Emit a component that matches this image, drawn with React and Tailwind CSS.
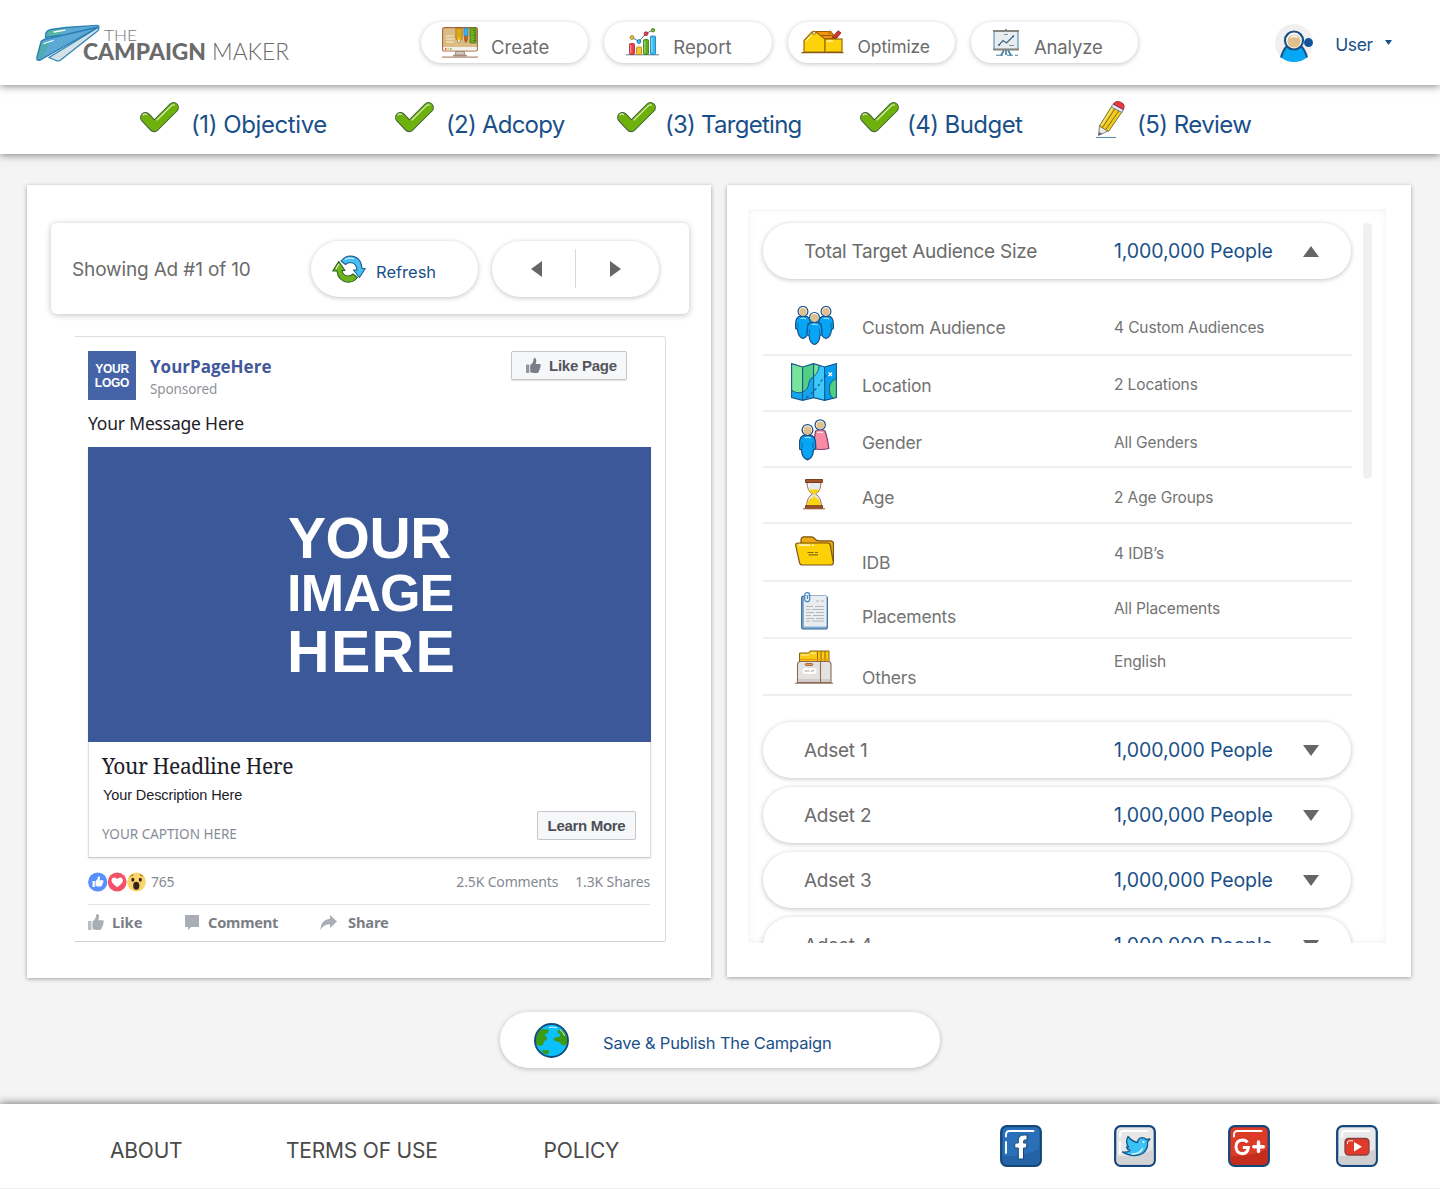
import React from "react";

/* ---------- brand ---------- */
function Logo() {
  return (
    <svg width="256" height="44" viewBox="34 22 256 44" className="block">
      <path d="M45.500 37.500Q44.500 31 51 29.500L66 27.500 97 25.500Q100 25.500 98.500 28L62 35z" fill="#58b3a4" stroke="#2b7fb5" strokeWidth="1.300" />
      <path d="M64 29L97 25.500Q100 25.500 98.500 28L60 36z" fill="#5ba9d4" />
      <path d="M49 57.500L98 27.500Q100 29 97.500 31L60 60.500Q58 61.500 56 60.500Z" fill="#d3e2e7" stroke="#2b7fb5" strokeWidth="1.200" />
      <path d="M41 42 Q42 40 46 39 L98.500 27 40 60 Q36 61 37 57Z" fill="#5ba9d4" stroke="#2b7fb5" strokeWidth="1.400" />
      <path d="M41.500 43L50 40.500 43 57 39 59.300Q37.500 59 38 56Z" fill="#4fae9b" opacity=".7" />
      <path d="M54 32l11-1.800M44 43.500l9-3" stroke="#fff" strokeWidth="1.300" strokeLinecap="round" />
      <text x="104" y="40.800" fontFamily="Lato, sans-serif" fontWeight="300" fontSize="16.500" textLength="33" lengthAdjust="spacingAndGlyphs" fill="#777">THE</text>
      <text x="83" y="59.500" fontFamily="Lato, sans-serif" fontWeight="900" fontSize="22.500" textLength="123" lengthAdjust="spacingAndGlyphs" fill="#6b6b6b">CAMPAIGN</text>
      <text x="212" y="59.500" fontFamily="Lato, sans-serif" fontWeight="300" fontSize="22.500" textLength="77" lengthAdjust="spacingAndGlyphs" fill="#6b6b6b">MAKER</text>
    </svg>
  );
}

/* ---------- navigation icons ---------- */
function CreateIcon() {
  return (
    <svg width="36" height="31" viewBox="0 0 36 31" className="block">
      <path d="M14 24h8l1 4H13z" fill="#cfc9c6" stroke="#8a6a58" strokeWidth=".7" />
      <path d="M0 30.200h36M11 28.600h14" stroke="#b08a78" strokeWidth="1.200" />
      <rect x=".6" y=".6" width="34.800" height="23.400" rx="1.600" fill="#dcbc85" stroke="#a5673f" strokeWidth="1.100" />
      <path d="M1.200 20h33.600v2.200q0 1.300-1.300 1.300H2.500q-1.300 0-1.300-1.300z" fill="#f3f1ef" />
      <path d="M4 9h8M4 12h8M4 15h8" stroke="#f6ead2" strokeWidth="1" />
      <path d="M14 1h6v10l-3 5-3-5z" fill="#f5c518" stroke="#8a5a1c" strokeWidth=".8" />
      <path d="M16 1v10M18 1v10" stroke="#b07a10" strokeWidth=".7" />
      <path d="M15.500 13h3L17 16z" fill="#eee" />
      <path d="M22 1h4v8h-4z" fill="#35b5ee" stroke="#3a6a8a" strokeWidth=".6" />
      <path d="M22 9h4v4q-1 3-3 3 0-2-1-3z" fill="#b5622b" />
      <path d="M28 1h6v15h-6z" fill="#6fae1c" stroke="#44701b" strokeWidth=".8" />
      <path d="M31 3.500h2.500M32 6h1.500M31 8.500h2.500M32 11h1.500M31 13.500h2.500" stroke="#34561a" strokeWidth=".7" />
      <path d="M3 22h1.500" stroke="#e33" strokeWidth="1.300" />
      <path d="M5.500 22H7" stroke="#eb3" strokeWidth="1.300" />
      <path d="M8 22h1.500" stroke="#4b4" strokeWidth="1.300" />
    </svg>
  );
}

function ReportIcon() {
  return (
    <svg width="33" height="28" viewBox="0 0 33 28" className="block">
      <path d="M0 26.800h33" stroke="#5b7f96" strokeWidth="1" />
      <rect x="3.500" y="15.500" width="5" height="11" rx="1" fill="#ee3e4c" stroke="#a82531" strokeWidth=".8" />
      <rect x="10.500" y="19" width="5" height="7.500" rx="1" fill="#f8c52c" stroke="#b07f12" strokeWidth=".8" />
      <rect x="17.500" y="11.500" width="5" height="15" rx="1" fill="#5fae18" stroke="#3a7410" strokeWidth=".8" />
      <rect x="24.500" y="8" width="5" height="18.500" rx="1" fill="#35bdf4" stroke="#1b76a8" strokeWidth=".8" />
      <path d="M4.800 17v8M18.800 13v12M25.800 10v14" stroke="#fff" strokeOpacity=".7" strokeWidth=".8" />
      <path d="M6 9.500L13 13.500 20 5.500 27 2" fill="none" stroke="#55778e" strokeWidth="1" />
      <circle cx="6" cy="9.500" r="1.900" fill="#f3c52a" stroke="#7a7a32" strokeWidth=".8" />
      <circle cx="13" cy="13.500" r="1.900" fill="#35bdf4" stroke="#2a6a90" strokeWidth=".8" />
      <circle cx="20" cy="5.700" r="1.900" fill="#ee3e4c" stroke="#8a2a33" strokeWidth=".8" />
      <circle cx="27" cy="2.200" r="1.700" fill="#7cc62c" stroke="#3a7410" strokeWidth=".8" />
    </svg>
  );
}

function OptimizeIcon() {
  return (
    <svg width="43" height="24" viewBox="0 0 43 24" className="block">
      <path d="M12 1.500h18l5 7H14z" fill="#f5930c" stroke="#9c5a08" strokeWidth="1" />
      <path d="M16 5.500h16" stroke="#9c5a08" strokeWidth="1" />
      <path d="M31 7.500L37 .800l3 2L35.500 8.500z" fill="#cf3b28" stroke="#8a2516" strokeWidth=".8" />
      <path d="M3 22V10.500L11 2q2-1.500 4 0l9 7v13z" fill="#fcd20a" stroke="#9c6a08" strokeWidth="1.200" />
      <rect x="24" y="9" width="17" height="13" fill="#fcd20a" stroke="#9c6a08" strokeWidth="1.200" />
      <path d="M5 11l5.500-6M26 11h6" stroke="#fff" strokeWidth="1" />
      <circle cx="13" cy="3" r="1.500" fill="#fff" stroke="#9c6a08" strokeWidth=".9" />
      <circle cx="29" cy="2.300" r="1.300" fill="#f5930c" stroke="#9c5a08" strokeWidth=".8" />
      <path d="M.500 22.600h42" stroke="#8a5a1c" strokeWidth="1.200" />
    </svg>
  );
}

function AnalyzeIcon() {
  return (
    <svg width="26" height="27" viewBox="0 0 26 27" className="block">
      <path d="M13 0v3M11 21L8 26.500M15 21l3 5.500M13 21v5" stroke="#3c7ea6" strokeWidth="1.600" />
      <path d="M3 26.300h7M14 26.300h6M22 26.300h3" stroke="#4c86aa" strokeWidth="1.100" />
      <rect x="1" y="2" width="24" height="18.500" fill="#e9edef" stroke="#5f93b4" strokeWidth="1.200" />
      <path d="M0 2h26M0 20.500h26" stroke="#85877e" strokeWidth="2" />
      <path d="M6 16l4-4.500 3.500 2.500 7-7" fill="none" stroke="#3d6684" strokeWidth="1.200" />
      <circle cx="6" cy="16" r="1" fill="#3d6684" />
      <circle cx="20.300" cy="7.200" r="1" fill="#3d6684" />
      <path d="M11 5.500h4M16 16.500h5" stroke="#7d96a5" strokeWidth="1" />
    </svg>
  );
}

function Avatar() {
  return (
    <svg width="40" height="38" viewBox="0 0 40 38" className="block">
      <circle cx="19" cy="19" r="19" fill="#f0f0f0" />
      <path d="M6 33.500Q8 26 12 22h14q4 4 6 11.500Q26 38 19 38T6 33.500z" fill="#06a8f6" />
      <path d="M6 33.500Q8 26 12 22M32 33.500Q30 26 26 22" fill="none" stroke="#1a5284" strokeWidth="2" />
      <circle cx="19" cy="16.500" r="9" fill="#fff" stroke="#1a5284" strokeWidth="2.200" />
      <circle cx="19" cy="17" r="6.600" fill="#dfc08d" />
      <path d="M15.500 13.500q3.500-2.500 7 0" fill="none" stroke="#fff" strokeWidth="1.300" />
      <circle cx="33.500" cy="18.600" r="4.500" fill="#12549a" />
    </svg>
  );
}

/* ---------- step icons ---------- */
function CheckIcon() {
  return (
    <svg width="39" height="31" viewBox="0 0 39 31" className="block">
      <path d="M5.500 15.500L14.200 24.800 33.500 5.500" fill="none" stroke="#3c5a3a" strokeWidth="10.800" strokeLinecap="round" strokeLinejoin="round" />
      <path d="M5.500 15.500L14.200 24.800 33.500 5.500" fill="none" stroke="#6fb10c" strokeWidth="9" strokeLinecap="round" strokeLinejoin="round" />
      <path d="M3 12.800q1.500-1.500 3.500-.3M17 18L31.500 3.600q1.500-1.200 3-.6" fill="none" stroke="#d9efb4" strokeWidth="1.200" strokeLinecap="round" />
    </svg>
  );
}

function PencilIcon() {
  return (
    <svg width="29" height="38" viewBox="0 0 29 38" className="block">
      <path d="M0 36.500h20" stroke="#5d8aa8" strokeWidth="1.100" />
      <path d="M3.500 24.500L2.500 34.500 12 30z" fill="#ece8e4" stroke="#6a7686" strokeWidth=".9" />
      <path d="M2.800 31v3.500l3.500-1.800z" fill="#5a6674" />
      <path d="M3.500 25L15.500 5.500l10.500 5.500L12.500 30.500z" fill="#f3cb1d" stroke="#7d7434" strokeWidth="1" />
      <path d="M6.500 26.500L19 7.500M9.800 28.500L23 9.500" stroke="#7c6a22" strokeWidth="1" />
      <path d="M5.300 24.500L17 6.500" stroke="#fdf0a0" strokeWidth="1" />
      <path d="M15.300 6l1.800-2.800 10.300 5.500L26 11.500z" fill="#e4e9ee" stroke="#6a7686" strokeWidth=".9" />
      <path d="M17.300 3Q19.300-.5 24 .9q4.500 1.600 4.200 4.600l-.8 3z" fill="#ea3743" stroke="#953039" strokeWidth=".9" />
    </svg>
  );
}

/* ---------- ad preview icons ---------- */
function RefreshIcon() {
  return (
    <svg width="34" height="28" viewBox="0 0 34 28" preserveAspectRatio="none" className="block">
      <path d="M9 6Q13 1 18.500 1 29 1.500 30 13.500h3.300L27.500 22.500 21.500 15H25Q24.500 8 18.500 7.500q-3 0-5 2z" fill="#45c0f5" stroke="#1d5f8f" strokeWidth="1.100" strokeLinejoin="round" />
      <path d="M25.500 22.500q-4 4.700-9 4.700Q6 26.500 5 16H.700L6.700 6.500 13 15.500H10q1 5.500 6.300 5.500 2.700 0 4.700-2z" fill="#6cb518" stroke="#2f5f2a" strokeWidth="1.100" strokeLinejoin="round" />
      <path d="M13 4.500q4-2.500 9-.8M4 14l3-5" fill="none" stroke="#fff" strokeOpacity=".85" strokeWidth="1.100" />
    </svg>
  );
}

function Thumb({ className }) {
  return (
    <svg viewBox="0 0 16 16" className={className} preserveAspectRatio="none" fill="currentColor">
      <path d="M0 7h3.500v9H0z" opacity=".8" />
      <path d="M4.500 7.500Q8 5 8 1.500 8 0 9.500 0T11 3q0 1.500-.7 3.300H14.500q1.300 0 1.300 1.300 0 1-.8 1.300.6.500.4 1.300-.1.900-.9 1.100.4.600.1 1.300-.3.700-.9.800.2.500-.1 1.200Q13.300 16 12 16H9q-2.500 0-4.500-1z" />
    </svg>
  );
}

function Reactions() {
  return (
    <svg width="58" height="20" viewBox="0 0 58 20" className="block">
      <circle cx="9.700" cy="10" r="9.600" fill="#5890ff" />
      <path d="M4.500 9h2.300v6H4.500zM7.500 9.200Q10 7.500 10 5.200q0-1 1-1t1 1.800q0 1-.4 2.200h2.900q1 0 1 1t-.6 1q.4.700-.3 1.400.2.800-.5 1.200.1 1.700-1.600 1.700H10q-1.300 0-2.500-.7z" fill="#fff" />
      <circle cx="29.200" cy="10" r="9.400" fill="#f25268" />
      <path d="M29.200 15.200Q23.500 11.500 23.500 8.300 23.700 5.500 26.300 5.500q2 0 2.900 1.800.9-1.800 2.900-1.800 2.600 0 2.800 2.800 0 3.200-5.700 6.900z" fill="#fff" />
      <circle cx="48.500" cy="10" r="9.400" fill="#fbd56b" />
      <ellipse cx="48.300" cy="13.800" rx="3.100" ry="4" fill="#33251b" />
      <ellipse cx="44.800" cy="7.700" rx="1.500" ry="2" fill="#33251b" />
      <ellipse cx="52.300" cy="7.700" rx="1.500" ry="2" fill="#33251b" />
      <path d="M42.300 4.500q1.200-1.700 3-1.600M51.800 2.900q1.800-.1 3 1.600" fill="none" stroke="#6a5526" strokeWidth="1" />
    </svg>
  );
}

/* ---------- audience icons ---------- */
function Person({ x, y, s = 1, body = "#06a5f5" }) {
  return (
    <g transform={`translate(${x} ${y}) scale(${s})`} stroke="#1b4f86" strokeWidth="1.200">
      <path d="M-4 10.500Q-7 12-7.300 17L-7.500 22q.3 1.500 2 1.200Q-5 31 0 32.500 5 31 5.500 23.200q1.700.3 2-1.200L7.300 17Q7 12 4 10.500z" fill={body} />
      <path d="M-5 22v-5M5 22v-5" strokeWidth=".7" />
      <path d="M-2.500 12.500q3-1 5.500.5" fill="none" stroke="#bfe8ff" strokeWidth="1" />
      <circle cx="0" cy="5.400" r="4.900" fill="#fff" />
      <circle cx="0" cy="5.800" r="3.700" fill="#dfc08d" stroke="none" />
    </g>
  );
}

function GroupIcon() {
  return (
    <svg width="39" height="39" viewBox="0 0 39 39" className="block">
      <Person x={8} y={0} />
      <Person x={31} y={0} />
      <Person x={19.5} y={6} />
    </svg>
  );
}

function MapIcon() {
  return (
    <svg width="46" height="38" viewBox="0 0 46 38" className="block">
      <path d="M.6.600l11 3.400 11-3.400 11 3.400L45.400.600v34L33.600 37.400 22.600 34.600 11.600 37.400.600 34.600z" fill="#12a6f2" />
      <path d="M22.600.600l11 3.400v33.400l-11-2.800z" fill="#3cc8fa" />
      <path d="M.6.600L11.600 4v25Q5 31 .6 27z" fill="#7be29d" />
      <path d="M11.600 4l11-3.400v13q-5 2-5 7.500t-6 8z" fill="#51cf85" />
      <path d="M22.600.600L28 2.300q0 7-5.400 11.300z" fill="#7be29d" />
      <path d="M33.600 4L45.400.600v34L33.600 37.400z" fill="#049fee" />
      <path d="M45.400 16q-7 2-7 9.500t4 10l3-.9z" fill="#51cf85" />
      <path d="M.6 27Q5 31 11.600 29q5.500-2.500 6-8t5-7.400Q28 9.300 28 2.300M45.400 16q-7 2-7 9.500t4 10" fill="none" stroke="#1b5e7c" strokeWidth="1" />
      <path d="M.6.600l11 3.400 11-3.400 11 3.400L45.400.600v34L33.600 37.400 22.600 34.600 11.600 37.400.600 34.600zM11.600 4v33.400M22.600.600v34M33.600 4v33.400" fill="none" stroke="#17578c" strokeWidth="1.100" />
      <path d="M15 35Q26 26 29 20t9-9" fill="none" stroke="#17578c" strokeWidth="1.100" strokeDasharray="3 2.500" />
      <path d="M37.500 9.500l3.500 3.500M41 9.500l-3.500 3.500" stroke="#fff" strokeWidth="1.200" />
    </svg>
  );
}

function GenderIcon() {
  return (
    <svg width="31" height="42" viewBox="0 0 31 42" className="block">
      <path d="M16.500 12Q21 9 26 12q2.500 7 3.800 17.500Q22 31.500 14 29.500z" fill="#f98ba3" stroke="#7b3f72" strokeWidth="1.200" />
      <path d="M18.500 13.500q3-1 5.500.3" fill="none" stroke="#fff" strokeWidth="1" />
      <circle cx="21.200" cy="5.900" r="5.100" fill="#fff" stroke="#1b4f86" strokeWidth="1.200" />
      <circle cx="21.200" cy="6.200" r="3.800" fill="#dfc08d" />
      <Person x={8.5} y={5} s={1.1} />
    </svg>
  );
}

function HourglassIcon() {
  return (
    <svg width="22" height="31" viewBox="0 0 22 31" className="block">
      <path d="M4 3h14q0 9-5.500 12Q18 18 18.500 27h-15Q4 18 9.500 15 4 12 4 3z" fill="#e8ebec" stroke="#977352" strokeWidth="1" />
      <path d="M5.500 10.500h11q-1.200 3-5.500 5-4.300-2-5.500-5z" fill="#fbd30f" />
      <path d="M4.300 26.500q.3-6.500 5.700-8l1-3 1 3q5.400 1.500 5.700 8z" fill="#fbd30f" />
      <path d="M6 5v3" stroke="#fff" strokeWidth="1.200" />
      <path d="M2.500.500h17v3h-17zM2.500 26.700h17v2.600h-17z" fill="#a4532a" stroke="#71351b" strokeWidth=".9" />
      <path d="M0 29.800h22" stroke="#8a5a3c" strokeWidth="1" />
    </svg>
  );
}

function FolderIcon() {
  return (
    <svg width="39" height="30" viewBox="0 0 39 30" className="block">
      <path d="M6 8V4Q6 .800 9 .800h7q2.500 0 4 2 1.300 2 4 2h11.500q3 0 3 3V26l-3 2.500z" fill="#eda912" stroke="#7a5518" strokeWidth="1.200" />
      <path d="M3 7h29.500q2 0 2.700 2L38.300 26q.2 3-2.500 3H7.500q-2.400 0-3-2.400L.700 9.500Q.500 7 3 7z" fill="#fdd108" stroke="#7a5518" strokeWidth="1.200" />
      <path d="M3.500 9.200H15M17 9.200h2" stroke="#fff" strokeWidth="1.200" />
      <path d="M12.500 16.500h6M20 16.500h3M13.500 18.800h9.500" stroke="#8a6a18" strokeWidth="1.200" />
    </svg>
  );
}

function DocumentIcon() {
  return (
    <svg width="27" height="38" viewBox="0 0 27 38" className="block">
      <path d="M.7 6Q.700 4 3 4h21q2.300 0 2.300 2v29q0 2-2 2H2.700q-2 0-2-2z" fill="#86aed2" stroke="#33699c" strokeWidth="1.200" />
      <path d="M3 4h22.500v30.500H3z" fill="#e9edf0" />
      <path d="M15 9h3M20 9h3M5 14.500h7M14 14.500h9M5 17.500h4M10.500 17.500H23M5 20.500h8M15 20.500h8M5 23.500h5M12 23.500h11M5 26.500h8M15 26.500h8M5 29h4M11 29h12" stroke="#b4b9bf" strokeWidth="1.200" />
      <rect x="3.700" y=".700" width="5" height="9" rx="2.500" fill="none" stroke="#3e84bd" strokeWidth="1.200" />
      <path d="M6.500 4v3" stroke="#3e84bd" strokeWidth="1.100" />
    </svg>
  );
}

function BoxIcon() {
  return (
    <svg width="38" height="34" viewBox="0 0 38 34" className="block">
      <path d="M4.500 12V3h9l1.500-2h19v11z" fill="#fbcc12" stroke="#8a6216" strokeWidth="1" />
      <path d="M22.500 1v11M26 1v11M30 1v11" stroke="#9a6c10" strokeWidth="1.100" />
      <path d="M6 5h8M16 3.200h5" stroke="#fff3b0" strokeWidth="1" />
      <path d="M5 9.500h29" stroke="#e59f0e" strokeWidth="1.500" />
      <path d="M2.500 32.500V14.500q0-3 3-3h27.500q3 0 3 3v18z" fill="#e3e2e1" stroke="#8d6a55" strokeWidth="1.100" />
      <path d="M3 29h32v3H3z" fill="#cfcdcc" />
      <path d="M25.500 11.500v21" stroke="#8d6a55" strokeWidth="1.100" />
      <rect x="10.300" y="13.500" width="7.500" height="2" rx="1" fill="#e49a52" stroke="#93562a" strokeWidth=".8" />
      <rect x="7.500" y="18" width="14" height="6" rx="3" fill="#fff" />
      <path d="M9.500 21h5M16 21.500l3-1.200" stroke="#a9a5a2" strokeWidth="1.100" />
      <path d="M0 33.300h38" stroke="#8a6a58" strokeWidth="1.100" />
    </svg>
  );
}

function GlobeIcon() {
  return (
    <svg width="35" height="35" viewBox="0 0 35 35" className="block">
      <circle cx="17.500" cy="17.500" r="16.600" fill="#0cc0fb" />
      <path d="M6 6.500Q9 5.500 13.500 6.500q2 .6 1.300 2.500-1 1.500-3.300 2-1.500 1.300 0 2.300 1.800.7 1.500 2.700-.5 1.500-2.500 2-.8 1-1 2.500-1 2.500-3.500 2.500T1.500 20Q.500 12 6 6.500z" fill="#3c9a14" />
      <path d="M23.500 8q1-1.500 3.500-1.500 2 .2 4 3.500 2.500 4 2.500 8.500-.5 3.500-3.500 4-3-.3-4-3-2-.7-4.500-1.300-2.300-.7-2-2.400.8-1.500 3-1.500 3 0 3.500-1.300.5-1.700-1-2.200-2-.8-1.500-2.800z" fill="#3c9a14" />
      <path d="M7 28q4-1.500 7.500-.8 1.500 1 .3 2.500-.5 1.500-3.300 1.500Q9 30 7 28z" fill="#3c9a14" />
      <circle cx="17.500" cy="17.500" r="16.500" fill="none" stroke="#124f7e" strokeWidth="1.900" />
      <path d="M15 4.500q4-1 8 .3M26 6.800q3.300 2.200 4.700 6" fill="none" stroke="#d9f4ff" strokeWidth="1" />
    </svg>
  );
}

/* ---------- social icons ---------- */
function Tile({ fill, shade, gloss, children }) {
  return (
    <svg width="42" height="42" viewBox="0 0 42 42" className="block">
      <rect x="1.200" y="1.200" width="39.600" height="39.600" rx="5.500" fill={fill} stroke="#15487a" strokeWidth="2.300" />
      <path d="M2.500 31Q24 32 39.500 24v11.500q0 4-4 4h-29q-4 0-4-4z" fill={shade} />
      <path d={gloss} fill="none" stroke="#fff" strokeWidth="1.900" strokeLinecap="round" />
      {children}
    </svg>
  );
}

const FacebookTile = () => (
  <Tile fill="#2a70b8" shade="#2262a5" gloss="M6 11.500V9.500Q6 6 9.500 6H33.500M6 17v11">
    <path d="M18.300 34V23h-3.500v-5h3.500v-2.500Q18.300 10 24 10h3v5h-2q-1.500 0-1.500 1.600V18H27l-.6 5h-2.900v11z" fill="#fff" stroke="#15487a" strokeWidth="1" />
  </Tile>
);

const TwitterTile = () => (
  <Tile fill="#e6e6e7" shade="#d3d3d5" gloss="M6 11.500V9.500Q6 6 9.500 6H33.500M6 17v11">
    <path d="M8.500 27q4.500.8 7.500-1.600-3-1-3.500-3.400 1 .3 2 0Q11 17 14 11.500q4 5 9.500 6 .3-4.500 4.700-4.800 2.300 0 4 1.800l3.800-.5-2.500 3q1 7-5 11.500Q19 33.500 8.500 27z" fill="#3cc1f5" stroke="#17578c" strokeWidth="1.300" strokeLinejoin="round" />
    <path d="M18 29q8 0 10.500-5.500" fill="none" stroke="#e2f6ff" strokeWidth="1.400" strokeLinecap="round" />
    <circle cx="29.500" cy="17" r="1" fill="#fff" />
  </Tile>
);

const GoogleTile = () => (
  <Tile fill="#dd3a27" shade="#c42d1c" gloss="M6 11.500V9.500Q6 6 9.500 6H33.500">
    <path d="M19.500 17.300Q17.800 15 14.300 15 8.200 15.400 8 21.700 8.200 28 14.300 28.700q5.500-.4 6-6.200h-5.500" fill="none" stroke="#fff" strokeWidth="3" />
    <path d="M30.500 17v9.500M25.800 21.700h9.500" stroke="#fff" strokeWidth="3.400" strokeLinecap="round" />
  </Tile>
);

const YoutubeTile = () => (
  <Tile fill="#e9e9ea" shade="#cfcfd1" gloss="M6 11.500V9.500Q6 6 9.500 6H33.500">
    <rect x="9" y="13.500" width="24" height="16.500" rx="3.500" fill="#e03a2b" stroke="#8a4040" strokeWidth="1.300" />
    <path d="M11.500 19v-1.500q0-1.700 1.700-1.700h4" fill="none" stroke="#fff" strokeWidth="1" />
    <path d="M18 17l8 4.700-8 4.800z" fill="#fff" />
  </Tile>
);

/* ---------- data ---------- */
const PILL = "rounded-full bg-white shadow-[0_1px_5px_rgba(0,0,0,0.24)]";

const NAV = [
  { label: "Create", Icon: CreateIcon, pad: "pl-[21px]", icon: "w-[36px]", text: "ml-[13px] mt-[9px] text-[18.5px]" },
  { label: "Report", Icon: ReportIcon, pad: "pl-[22px]", icon: "mb-[1px] w-[33px]", text: "ml-[14px] mt-[9px] text-[18.5px]" },
  { label: "Optimize", Icon: OptimizeIcon, pad: "pl-[13px]", icon: "mb-[1px] w-[43px]", text: "ml-[14px] mt-[8px] text-[17.5px] tracking-[-0.12px]" },
  { label: "Analyze", Icon: AnalyzeIcon, pad: "pl-[22px]", icon: "mb-[1px] w-[26px]", text: "ml-[15px] mt-[9px] text-[18.5px] tracking-[-0.15px]" },
];

const STEPS = [
  { label: "(1) Objective", Icon: CheckIcon, text: "ml-[12px] tracking-[-0.42px]", icon: "mb-[6px]" },
  { label: "(2) Adcopy", Icon: CheckIcon, text: "ml-[12px] tracking-[-0.75px]", icon: "mb-[6px]" },
  { label: "(3) Targeting", Icon: CheckIcon, text: "ml-[9px] tracking-[-0.74px]", icon: "mb-[6px]" },
  { label: "(4) Budget", Icon: CheckIcon, text: "ml-[8px] tracking-[-0.55px]", icon: "mb-[6px]" },
  { label: "(5) Review", Icon: PencilIcon, text: "ml-[12px] tracking-[-0.55px]", icon: "" },
];

const ROWS = [
  { label: "Custom Audience", value: "4 Custom Audiences", Icon: GroupIcon, row: "h-[56px]", icon: "mt-[6px]", l: "mt-[19px]", v: "mt-[20px]" },
  { label: "Location", value: "2 Locations", Icon: MapIcon, row: "h-[56px]", icon: "mt-[7px]", l: "mt-[21px]", v: "mt-[21px]" },
  { label: "Gender", value: "All Genders", Icon: GenderIcon, row: "h-[56px]", icon: "mt-[7px]", l: "mt-[22px]", v: "mt-[23px]" },
  { label: "Age", value: "2 Age Groups", Icon: HourglassIcon, row: "h-[56px]", icon: "mt-[11px]", l: "mt-[21px]", v: "mt-[22px]" },
  { label: "IDB", value: "4 IDB’s", Icon: FolderIcon, row: "h-[58px]", icon: "mt-[12px]", l: "mt-[30px]", v: "mt-[22px]" },
  { label: "Placements", value: "All Placements", Icon: DocumentIcon, row: "h-[57px]", icon: "mt-[10px]", l: "mt-[26px]", v: "mt-[19px]" },
  { label: "Others", value: "English", Icon: BoxIcon, row: "h-[57px]", icon: "mt-[11px]", l: "mt-[30px]", v: "mt-[15px]" },
];

const ADSETS = ["Adset 1", "Adset 2", "Adset 3", "Adset 4"];

/* ---------- sections ---------- */
function Header() {
  return (
    <header className="relative z-20 flex h-[85px] bg-white pl-[34px] shadow-[0_1px_8px_rgba(0,0,0,0.5)]">
      <div className="w-[387px] pt-[22px]"><Logo /></div>
      <nav className="mt-[22px] flex h-[41px] gap-[16px]">
        {NAV.map(({ label, Icon, pad, icon, text }) => (
          <a key={label} className={`flex h-[41px] w-[167.3px] items-center text-[#6b6b6b] ${PILL} ${pad}`}>
            <span className={`shrink-0 ${icon}`}><Icon /></span>
            <span className={`leading-none ${text}`}>{label}</span>
          </a>
        ))}
      </nav>
      <div className="ml-[137px] mt-[24px] flex h-[38px] items-center text-[#1a5089]">
        <Avatar />
        <span className="ml-[20px] mt-[3px] text-[17.5px] leading-none tracking-[-0.4px]">User</span>
        <svg width="7" height="5" viewBox="0 0 7 5" className="mb-[1px] ml-[12px]"><path d="M0 0h7L3.500 5z" fill="#1a5089" /></svg>
      </div>
    </header>
  );
}

function Steps() {
  return (
    <div className="relative z-10 grid h-[69px] grid-cols-[255px_222px_243px_236px_1fr] bg-white pl-[140px] shadow-[0_1px_8px_rgba(0,0,0,0.5)]">
      {STEPS.map(({ label, Icon, text, icon }) => (
        <div key={label} className="flex h-[70px] items-center">
          <span className={icon}><Icon /></span>
          <span className={`mt-[9px] text-[24px] leading-none text-[#1a5089] ${text}`}>{label}</span>
        </div>
      ))}
    </div>
  );
}

function AdCard() {
  return (
    <article className="ml-[48px] mt-[22px] h-[606px] w-[591px] rounded-r-[3px] border-y border-r border-[#dcdde0] border-b-[#cfd0d3] pl-[13px] pr-[14px] font-['Noto_Sans',sans-serif]">
      <div className="flex pt-[14px]">
        <div className="flex h-[49px] w-[48px] flex-col items-center justify-center gap-[2px] bg-[#4564a8] font-['Liberation_Sans',sans-serif] text-[12px] font-bold leading-none tracking-[-0.25px] text-white">
          <span>YOUR</span>
          <span>LOGO</span>
        </div>
        <div className="ml-[14px] w-[361px] pt-[7px] leading-none">
          <div className="font-['Open_Sans','Noto_Sans',sans-serif] text-[17px] font-bold leading-none text-[#42589b]">YourPageHere</div>
          <div className="mt-[8px] text-[13.5px] leading-none tracking-[-0.1px] text-[#8f9298]">Sponsored</div>
        </div>
        <div className="flex h-[29px] w-[116px] items-center rounded-[2px] border border-[#c4c6cb] bg-[#f6f7f9] pl-[14px] font-['Liberation_Sans',sans-serif] text-[15px] font-bold leading-none text-[#52555c] shadow-[0_1px_1px_rgba(0,0,0,0.12)]">
          <Thumb className="h-[15px] w-[15px] text-[#7b7e86]" />
          <span className="ml-[8px] tracking-[-0.25px]">Like Page</span>
        </div>
      </div>
      <p className="mt-[15px] h-[32px] text-[17.5px] leading-none tracking-[-0.2px] text-[#1d2129]">Your Message Here</p>
      <div className="h-[411px] w-[563px] border border-t-0 border-[#dedfe2] border-b-[#c9cacd] shadow-[0_1px_2px_rgba(0,0,0,0.1)]">
        <div className="-mx-px h-[295px] bg-[#3b5998] pl-[200px] pt-[63px] font-['Liberation_Sans',sans-serif] font-bold leading-none text-white">
          <div className="h-[57px] text-[57px] leading-[57px] tracking-[-0.4px]">YOUR</div>
          <div className="-ml-[1px] h-[54px] text-[52px] leading-[53px] tracking-[-0.8px]">IMAGE</div>
          <div className="-ml-[1px] h-[62px] text-[59px] leading-[62px] tracking-[1.3px]">HERE</div>
        </div>
        <div className="flex">
          <div className="w-[448px] pl-[13px] pt-[13px]">
            <div className="font-['Noto_Serif','DejaVu_Serif',serif] text-[21px] leading-[23px] tracking-[-0.35px] text-[#1d2129]">Your Headline Here</div>
            <div className="ml-[1px] mt-[10px] font-['Liberation_Sans',sans-serif] text-[14.5px] leading-none tracking-[-0.1px] text-[#1d2129]">Your Description Here</div>
            <div className="mt-[25px] text-[13.5px] leading-none text-[#868c98]">YOUR CAPTION HERE</div>
          </div>
          <div className="mt-[69px] flex h-[29px] w-[99px] items-center justify-center rounded-[2px] border border-[#c4c6cb] bg-[#f6f7f9] font-['Liberation_Sans',sans-serif] text-[15px] font-bold leading-none tracking-[-0.3px] text-[#4b4f56]">Learn More</div>
        </div>
      </div>
      <div className="flex h-[47px] w-[562px] items-center border-b border-[#e3e4e6] pt-[2px] text-[14px] leading-none text-[#858992]">
        <Reactions />
        <span className="ml-[5px] tracking-[-0.3px]">765</span>
        <span className="ml-auto tracking-[-0.15px]">2.5K Comments</span>
        <span className="ml-[17px] tracking-[-0.15px]">1.3K Shares</span>
      </div>
      <div className="flex h-[34px] items-center text-[14.7px] font-bold leading-none text-[#7b7e86]">
        <Thumb className="h-[16px] w-[16px] text-[#a9adb6]" />
        <span className="ml-[8px] w-[73px]">Like</span>
        <svg width="14" height="15" viewBox="0 0 14 15"><path d="M0 0h14v12H6l-3 3v-3H0z" fill="#a9adb6" /></svg>
        <span className="ml-[9px] w-[112px] tracking-[-0.25px]">Comment</span>
        <svg width="17" height="15" viewBox="0 0 17 15"><path d="M10 0l7 6.500-7 6.500V9.300Q3.500 9.300 0 15 1 4.500 10 3.700z" fill="#a9adb6" /></svg>
        <span className="ml-[11px] tracking-[-0.15px]">Share</span>
      </div>
    </article>
  );
}

function AdPanel() {
  return (
    <section className="h-[793px] w-[684px] bg-white pt-[38px] shadow-[0_1px_4px_rgba(0,0,0,0.35)]">
      <div className="ml-[24px] flex h-[91px] w-[638px] items-center rounded-[6px] bg-white pl-[21px] shadow-[0_1px_6px_rgba(0,0,0,0.25)]">
        <span className="mt-[2px] w-[239px] text-[19px] leading-none tracking-[-0.15px] text-[#6b6b6b]">Showing Ad #1 of 10</span>
        <div className={`flex h-[56px] w-[167px] items-center pl-[21px] ${PILL}`}>
          <RefreshIcon />
          <span className="ml-[10px] mt-[7px] text-[16.5px] leading-none text-[#1a5089]">Refresh</span>
        </div>
        <div className={`ml-[14px] flex h-[56px] w-[167px] items-center ${PILL}`}>
          <svg width="11" height="16" viewBox="0 0 11 16" className="ml-[39px]"><path d="M11 0v16L0 8z" fill="#666" /></svg>
          <span className="ml-[33px] h-[39px] w-px bg-[#d9d9d9]" />
          <svg width="11" height="16" viewBox="0 0 11 16" className="ml-[34px]"><path d="M0 0v16l11-8z" fill="#666" /></svg>
        </div>
      </div>
      <AdCard />
    </section>
  );
}

function SummaryPill({ label, open, tracking }) {
  return (
    <div className={`flex h-[56px] w-[588px] shrink-0 items-center pl-[41px] ${PILL}`}>
      <span className={`w-[310px] text-[19px] leading-none text-[#6b6b6b] ${tracking}`}>{label}</span>
      <span className="mt-[2px] w-[189px] text-[19.5px] leading-none tracking-[-0.1px] text-[#1a5089]">1,000,000 People</span>
      <svg width="16" height="11" viewBox="0 0 16 11">
        <path d={open ? "M0 11h16L8 0z" : "M0 0h16L8 11z"} fill="#666" />
      </svg>
    </div>
  );
}

function AudiencePanel() {
  return (
    <section className="h-[792px] w-[684px] bg-white pl-[21px] pt-[24px] shadow-[0_1px_4px_rgba(0,0,0,0.35)]">
      <div className="flex h-[734px] w-[638px] overflow-hidden pl-[15px] pt-[14px] shadow-[inset_0_0_8px_rgba(0,0,0,0.06)]">
        <div className="flex w-[589px] flex-col">
          <SummaryPill label="Total Target Audience Size" open tracking="tracking-[-0.27px]" />
          <ul className="mt-[21px] shrink-0">
            {ROWS.map(({ label, value, Icon, row, icon, l, v }) => (
              <li key={label} className={`flex items-start border-b-2 border-[#efefef] text-[#737373] ${row}`}>
                <span className={`ml-[20px] flex w-[62px] justify-center ${icon}`}><Icon /></span>
                <span className={`ml-[17px] w-[252px] text-[17.5px] leading-none tracking-[-0.22px] ${l}`}>{label}</span>
                <span className={`text-[15.5px] leading-none tracking-[-0.12px] ${v}`}>{value}</span>
              </li>
            ))}
          </ul>
          <div className="mt-[26px] flex flex-col gap-[9px]">
            {ADSETS.map((a) => <SummaryPill key={a} label={a} tracking="tracking-[-0.25px]" />)}
          </div>
        </div>
        <div className="ml-[11px] h-[256px] w-[9px] rounded-full bg-[#f0f0f0]" />
      </div>
    </section>
  );
}

function Footer() {
  return (
    <footer className="relative flex h-[85px] items-start border-b border-[#efefef] bg-white pl-[110px] shadow-[0_-1px_8px_rgba(0,0,0,0.5)]">
      <div className="flex pt-[36px] text-[21px] leading-[21px] text-[#4a4a4a]">
        <span className="w-[176px] tracking-[-0.2px]">ABOUT</span>
        <span className="w-[257.5px] tracking-[-0.2px]">TERMS OF USE</span>
        <span className="w-[456.5px] tracking-[-0.15px]">POLICY</span>
      </div>
      <div className="flex pt-[21px]">
        <FacebookTile />
        <span className="ml-[72px]"><TwitterTile /></span>
        <span className="ml-[72px]"><GoogleTile /></span>
        <span className="ml-[66px]"><YoutubeTile /></span>
      </div>
    </footer>
  );
}

export default function App() {
  return (
    <div className="h-[1189px] w-[1440px] overflow-hidden bg-[#f4f4f4] font-['Inter',sans-serif]">
      <Header />
      <Steps />
      <main className="h-[950px]">
        <div className="flex items-start gap-[16px] pl-[27px] pt-[31px]">
          <AdPanel />
          <AudiencePanel />
        </div>
        <button className={`mx-auto mt-[34px] flex h-[56px] w-[440px] items-center pl-[34px] ${PILL}`}>
          <GlobeIcon />
          <span className="ml-[34px] mt-[6px] text-[16.5px] leading-none tracking-[-0.18px] text-[#1a5089]">Save &amp; Publish The Campaign</span>
        </button>
      </main>
      <Footer />
    </div>
  );
}
